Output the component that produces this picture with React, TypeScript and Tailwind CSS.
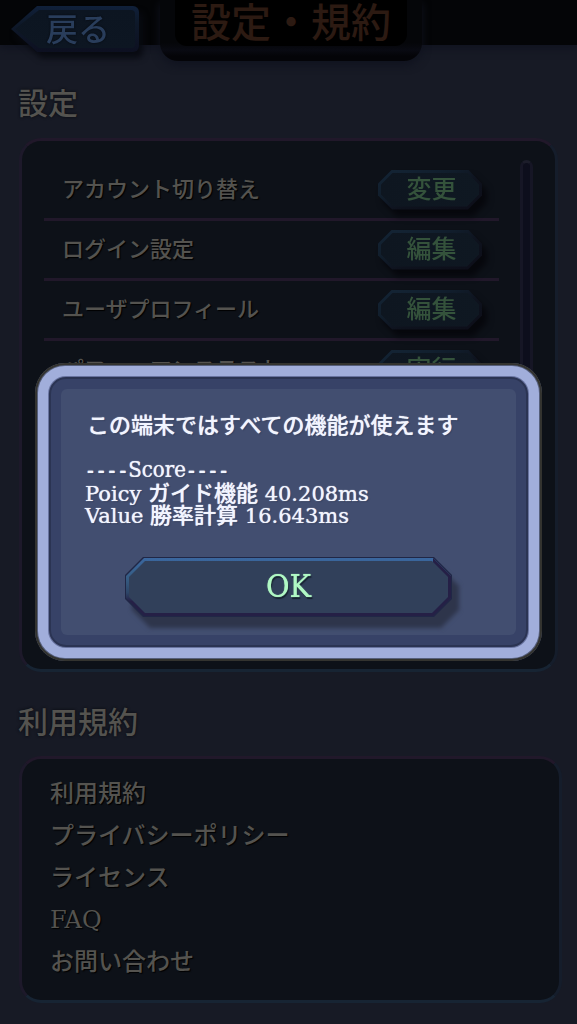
import React from "react";

type Row = { label: string; action: string };

const rows: Row[] = [
  { label: "アカウント切り替え", action: "変更" },
  { label: "ログイン設定", action: "編集" },
  { label: "ユーザプロフィール", action: "編集" },
  { label: "パフォーマンステスト", action: "実行" },
];

const terms = ["利用規約", "プライバシーポリシー", "ライセンス", "FAQ", "お問い合わせ"];

const panel =
  "rounded-[22px] border-3 border-t-[#21182a] border-l-[#1d192a] border-r-[#151d2b] border-b-[#172433] bg-[#0d1118]";

const heading = "ml-[18px] text-[30px] leading-[30px] font-medium [text-shadow:0_0_3px_#07080c]";

function SmallButton({ children, label }: { children: string; label: string }) {
  return (
    <button
      type="button"
      aria-label={label}
      className="h-10 w-[104px] shrink-0 text-[25px] leading-none font-medium text-[#34523b] drop-shadow-[5px_7px_3px_#06070c]"
    >
      <span className="block h-full bg-[linear-gradient(160deg,#142536_0%,#111e2c_35%,#0e121d_60%,#0d0e19_100%)] p-[3px] [clip-path:polygon(14px_0,calc(100%-14px)_0,100%_14px,100%_calc(100%-14px),calc(100%-14px)_100%,14px_100%,0_calc(100%-14px),0_14px)]">
        <span className="flex h-full items-center justify-center bg-[linear-gradient(90deg,#0e1620,#0f1822)] pb-px pl-[3px] [clip-path:polygon(12px_0,calc(100%-12px)_0,100%_12px,100%_calc(100%-12px),calc(100%-12px)_100%,12px_100%,0_calc(100%-12px),0_12px)]">
          {children}
        </span>
      </span>
    </button>
  );
}

function OkButton() {
  const clip =
    "[clip-path:polygon(18px_0,calc(100%-18px)_0,100%_18px,100%_calc(100%-18px),calc(100%-18px)_100%,18px_100%,0_calc(100%-18px),0_18px)]";
  return (
    <button
      type="button"
      className="mx-16 mt-[30px] h-15 text-[32px] leading-none text-[#b0f8c4] drop-shadow-[7px_11px_2px_#2e354b]"
    >
      <span className={`block h-full bg-[#202746] p-px ${clip}`}>
        <span
          className={`block h-full bg-[linear-gradient(90deg,transparent_calc(100%-18px),#252046_calc(100%-18px)),linear-gradient(180deg,#3a679f_0%,#365c83_35%,#2d4567_60%,#252046_75%,#252046_100%)] p-[3px] ${clip}`}
        >
          <span className="flex h-full items-center justify-center bg-[#31405a] pb-[3px] [clip-path:polygon(16px_0,calc(100%-16px)_0,100%_16px,100%_calc(100%-16px),calc(100%-16px)_100%,16px_100%,0_calc(100%-16px),0_16px)] [text-shadow:0_0_1px_#b0f8c4,1px_2px_1px_#14202d]">
            OK
          </span>
        </span>
      </span>
    </button>
  );
}

function Latin({ children }: { children: string }) {
  return <span className="font-['DejaVu_Serif',serif] text-[21px]">{children}</span>;
}

function Dashes() {
  return (
    <span className="font-['Liberation_Mono',monospace] text-lg leading-[22px] font-bold">----</span>
  );
}

export default function App() {
  return (
    <div className="relative min-h-screen bg-[#171a25] font-['DejaVu_Serif_Condensed','DejaVu_Serif','Noto_Sans_CJK_JP',sans-serif] text-[#54534f]">
      <header className="flex h-[45px] items-start bg-[#040507] pl-[11px] shadow-[0_3px_8px_#10131f]">
        <a
          href="#back"
          className="mt-[6px] h-[46px] w-32 text-[32px] leading-none font-medium text-[#293d5b] drop-shadow-[4px_6px_3px_#080a11]"
        >
          <span className="block h-full rounded-r-md bg-[linear-gradient(180deg,#10203a_0%,#0e192a_35%,#0d1021_100%)] p-[4px] [clip-path:polygon(26px_0,100%_0,100%_100%,26px_100%,0_50%)]">
            <span className="flex h-full items-center justify-center rounded-r-sm bg-[linear-gradient(180deg,#0c1521,#0d1622)] pt-px pl-[6px] [clip-path:polygon(24px_0,100%_0,100%_100%,24px_100%,0_50%)] [text-shadow:0_0_2px_#05070b]">
              戻る
            </span>
          </span>
        </a>
        <div className="ml-[21px] h-[61px] w-[262px] shrink-0 rounded-b-[18px] bg-[linear-gradient(180deg,#050609_70%,#090a12_82%,#040408_92%)] px-[15px] shadow-[0_4px_8px_#10131f]">
          <h1 className="flex h-[46px] items-center justify-center rounded-b-[12px] bg-black text-[40px] leading-none font-medium text-[#2c1a12]">
            設定・規約
          </h1>
        </div>
      </header>

      <main>
        <h2 className={`mt-11 ${heading}`}>設定</h2>
        <section className={`mx-[19px] mt-[19px] flex h-[534px] overflow-hidden pl-[22px] ${panel}`}>
          <ul className="mt-5 min-w-0 flex-1">
            {rows.map((row) => (
              <li
                key={row.label}
                className="flex h-[60px] items-center justify-between border-b-3 border-[#21182a] pr-[17px] pl-[18px]"
              >
                <span className="text-[22px] leading-none font-medium [text-shadow:1px_1px_1px_#000]">
                  {row.label}
                </span>
                <SmallButton label={`${row.label} ${row.action}`}>{row.action}</SmallButton>
              </li>
            ))}
          </ul>
          <div className="mt-[19px] mr-[22px] mb-4 ml-[21px] w-[13px] shrink-0 rounded-full border-3 border-[#161625] border-t-[#1c1d2a] bg-[#0d0e1c]" />
        </section>

        <h2 className={`mt-9 ${heading}`}>利用規約</h2>
        <nav className={`mt-[18px] mr-[15px] mb-5 ml-[19px] px-7 pt-[14px] pb-[17px] ${panel}`}>
          <ul>
            {terms.map((term) => (
              <li key={term} className="flex h-[42px] items-center">
                <a
                  href={`#${term}`}
                  className="font-['DejaVu_Serif','Noto_Sans_CJK_JP',sans-serif] text-2xl leading-none font-medium [text-shadow:1px_1px_1px_#000]"
                >
                  {term}
                </a>
              </li>
            ))}
          </ul>
        </nav>
      </main>

      <div className="fixed inset-0 flex items-center px-[35px]">
        <div
          role="dialog"
          aria-modal="true"
          aria-labelledby="dialog-title"
          className="w-full rounded-[30px] bg-[#555e7a] p-[3px] shadow-[inset_0_0_0_2px_#33332f]"
        >
          <div className="rounded-[27px] bg-[#a1aedb] p-[10px]">
            <div className="rounded-[18px] bg-[#6974a0] p-px">
              <div className="rounded-[17px] bg-[#2b3453] p-[2px]">
                <div className="rounded-[15px] bg-[#374267] p-[10px]">
                  <div className="flex flex-col rounded-md bg-[#424e70] pt-[26px] pb-[18px]">
                    <div className="px-6 text-[22px] leading-[22px] font-medium text-[#f2f5ff] [text-shadow:0_0_1px_#f2f5ff,1px_1px_1px_#303b59]">
                      <p id="dialog-title" className="pl-[2px]">
                        この端末ではすべての機能が使えます
                      </p>
                      <p className="mt-[22px]">
                        <Dashes />
                        Score
                        <Dashes />
                      </p>
                      <p>
                        <Latin>Poicy </Latin>ガイド機能<Latin> 40.208ms</Latin>
                      </p>
                      <p>
                        <Latin>Value </Latin>勝率計算<Latin> 16.643ms</Latin>
                      </p>
                    </div>
                    <OkButton />
                  </div>
                </div>
              </div>
            </div>
          </div>
        </div>
      </div>
    </div>
  );
}
